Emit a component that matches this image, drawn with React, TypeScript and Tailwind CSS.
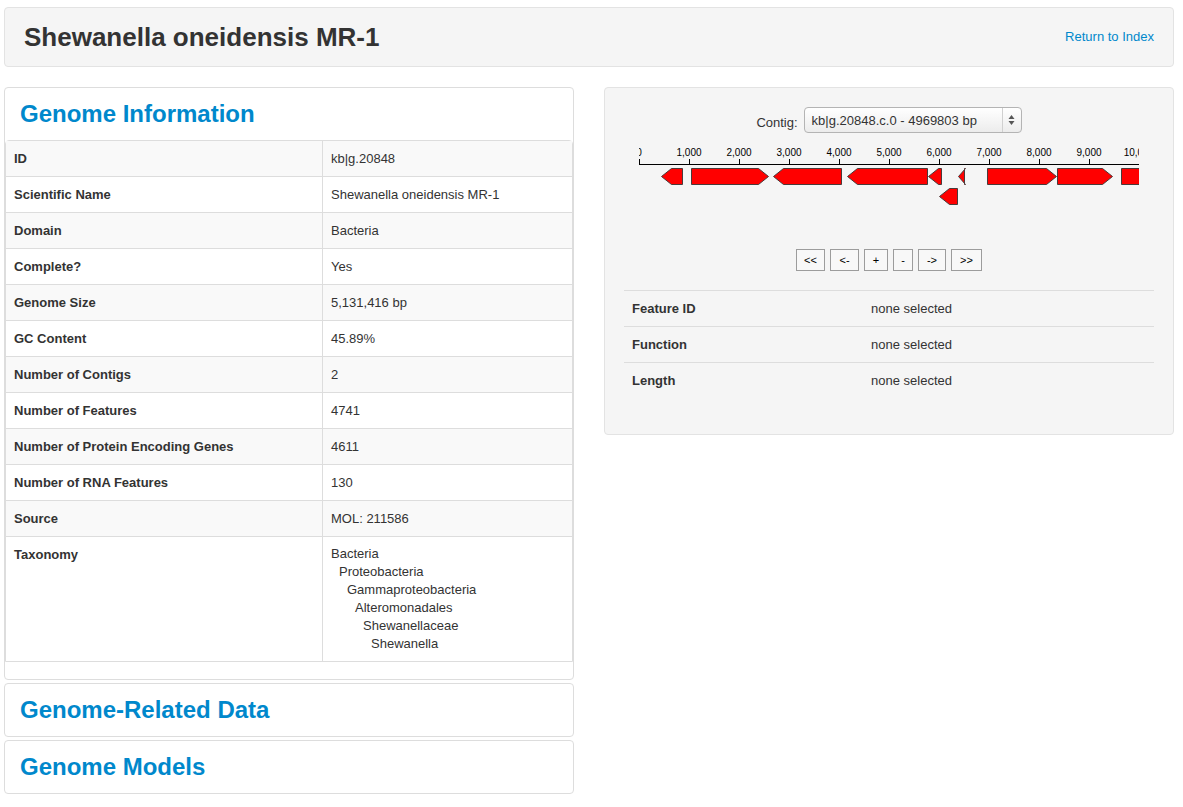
import React from 'react';

const genomeRows: { label: string; value: string }[] = [
  { label: 'ID', value: 'kb|g.20848' },
  { label: 'Scientific Name', value: 'Shewanella oneidensis MR-1' },
  { label: 'Domain', value: 'Bacteria' },
  { label: 'Complete?', value: 'Yes' },
  { label: 'Genome Size', value: '5,131,416 bp' },
  { label: 'GC Content', value: '45.89%' },
  { label: 'Number of Contigs', value: '2' },
  { label: 'Number of Features', value: '4741' },
  { label: 'Number of Protein Encoding Genes', value: '4611' },
  { label: 'Number of RNA Features', value: '130' },
  { label: 'Source', value: 'MOL: 211586' },
];

const taxonomy = [
  'Bacteria',
  'Proteobacteria',
  'Gammaproteobacteria',
  'Alteromonadales',
  'Shewanellaceae',
  'Shewanella',
];

// features in svg coords: start, end, direction, track
const features: { a: number; b: number; dir: 'L' | 'R' | 'N'; track: number }[] = [
  { a: 22, b: 44, dir: 'L', track: 0 },
  { a: 52, b: 130, dir: 'R', track: 0 },
  { a: 134, b: 203, dir: 'L', track: 0 },
  { a: 208, b: 289, dir: 'L', track: 0 },
  { a: 289, b: 303, dir: 'L', track: 0 },
  { a: 319, b: 326, dir: 'L', track: 0 },
  { a: 348, b: 418, dir: 'R', track: 0 },
  { a: 418, b: 474, dir: 'R', track: 0 },
  { a: 482, b: 520, dir: 'N', track: 0 },
  { a: 300, b: 319, dir: 'L', track: 1 },
];

function arrowPoints(a: number, b: number, dir: 'L' | 'R' | 'N', track: number) {
  const y0 = 28.5 + track * 20;
  const y1 = y0 + 16;
  const mid = (y0 + y1) / 2;
  const head = Math.min(10, b - a);
  const x0 = a + 0.5;
  const x1 = b - 0.5;
  if (dir === 'L') {
    return `${x0},${mid} ${x0 + head},${y0} ${x1},${y0} ${x1},${y1} ${x0 + head},${y1}`;
  }
  if (dir === 'R') {
    return `${x0},${y0} ${x1 - head},${y0} ${x1},${mid} ${x1 - head},${y1} ${x0},${y1}`;
  }
  return `${x0},${y0} ${x1},${y0} ${x1},${y1} ${x0},${y1}`;
}

function ContigBrowser() {
  const ticks = Array.from({ length: 11 }, (_, i) => i);
  return (
    <svg width="500" height="100" className="block overflow-hidden">
      {ticks.map((i) => (
        <g key={i}>
          <line x1={i * 50 + 0.5} y1={19} x2={i * 50 + 0.5} y2={24} stroke="#000" strokeWidth="1" />
          <text
            x={i * 50}
            y={16}
            textAnchor="middle"
            fontSize="10"
            fontFamily="'Liberation Sans', Arial, sans-serif"
            fill="#000"
          >
            {i === 0 ? '0' : `${i},000`}
          </text>
        </g>
      ))}
      <line x1={0} y1={24.5} x2={500} y2={24.5} stroke="#000" strokeWidth="1" />
      {features.map((f, i) => (
        <polygon key={i} points={arrowPoints(f.a, f.b, f.dir, f.track)} fill="#ff0000" stroke="#4a3a3a" strokeWidth="1" />
      ))}
    </svg>
  );
}

function SortArrows() {
  return (
    <svg width="7" height="12" viewBox="0 0 7 12">
      <polygon points="3.5,1 6.5,5 0.5,5" fill="#555" />
      <polygon points="0.5,7 6.5,7 3.5,11" fill="#555" />
    </svg>
  );
}

function NavButton({ label, w }: { label: string; w: string }) {
  return (
    <div
      className={`${w} h-[22px] flex items-center justify-center border border-[#9c9c9c] bg-[#f8f8f8] text-[11px] text-black`}
    >
      {label}
    </div>
  );
}

function PanelTitle({ children }: { children: React.ReactNode }) {
  return (
    <div className="h-[52px] flex items-center px-[15px] text-[24px] font-bold text-[#0088cc] leading-none">
      {children}
    </div>
  );
}

export default function App() {
  return (
    <div
      className="min-h-[807px] bg-white pt-[7px] text-[13px] text-[#333]"
      style={{ fontFamily: "'Liberation Sans', Arial, Helvetica, sans-serif" }}
    >
      <div className="ml-[4px] w-[1170px]">
        {/* header */}
        <div className="h-[60px] flex items-center justify-between px-[19px] bg-[#f5f5f5] border border-[#e3e3e3] rounded-[4px]">
          <h1 className="text-[26px] font-bold text-[#333] leading-none">Shewanella oneidensis MR-1</h1>
          <a className="text-[13px] text-[#0088cc]">Return to Index</a>
        </div>

        <div className="flex gap-[30px] mt-[20px] items-start">
          {/* left column */}
          <div className="w-[570px] flex flex-col gap-[3px]">
            <div className="border border-[#ddd] rounded-[4px] bg-white pb-[17px]">
              <PanelTitle>Genome Information</PanelTitle>
              <div className="border border-[#ddd] rounded-t-[4px]">
                {genomeRows.map((r, i) => (
                  <div
                    key={r.label}
                    className={`flex leading-[19px] ${i > 0 ? 'border-t border-[#ddd]' : ''} ${i % 2 === 0 ? 'bg-[#f9f9f9]' : 'bg-white'}`}
                  >
                    <div className="w-[317px] px-2 py-2 font-bold border-r border-[#ddd]">{r.label}</div>
                    <div className="flex-1 px-2 py-2">{r.value}</div>
                  </div>
                ))}
                <div className="flex border-t border-[#ddd] bg-white">
                  <div className="w-[317px] px-2 py-2 leading-[19px] font-bold border-r border-[#ddd]">Taxonomy</div>
                  <div className="flex-1 px-2 py-2 leading-[18px]">
                    {taxonomy.map((t, i) => (
                      <div key={t} style={{ paddingLeft: i * 8 }}>
                        {t}
                      </div>
                    ))}
                  </div>
                </div>
              </div>
            </div>
            <div className="border border-[#ddd] rounded-[4px] bg-white">
              <PanelTitle>Genome-Related Data</PanelTitle>
            </div>
            <div className="border border-[#ddd] rounded-[4px] bg-white">
              <PanelTitle>Genome Models</PanelTitle>
            </div>
          </div>

          {/* right column */}
          <div className="w-[570px] h-[348px] bg-[#f5f5f5] border border-[#e3e3e3] rounded-[4px] p-[19px]">
            <div className="flex items-end justify-center gap-[6px] h-[26px]">
              <span className="text-[13px] text-[#333] mb-[1px]">Contig:</span>
              <div className="w-[218px] h-[26px] flex items-center border border-[#b4b4b4] rounded-[4px] bg-linear-to-b from-white to-[#ececec] text-[13px] text-[#333]">
                <span className="flex-1 pl-[7px] pt-[1px]">kb|g.20848.c.0 - 4969803 bp</span>
                <span className="h-[24px] w-[19px] flex items-center justify-center border-l border-[#d0d0d0]">
                  <SortArrows />
                </span>
              </div>
            </div>
            <div className="flex justify-center mt-[7px]">
              <ContigBrowser />
            </div>
            <div className="flex justify-center gap-[5px] mt-[9px]">
              <NavButton label="<<" w="w-[29px]" />
              <NavButton label="<-" w="w-[29px]" />
              <NavButton label="+" w="w-[24px]" />
              <NavButton label="-" w="w-[20px]" />
              <NavButton label="->" w="w-[28px]" />
              <NavButton label=">>" w="w-[31px]" />
            </div>
            <div className="mt-[19px]">
              {['Feature ID', 'Function', 'Length'].map((l) => (
                <div key={l} className="flex border-t border-[#ddd] leading-[19px]">
                  <div className="w-[239px] px-2 py-2 font-bold">{l}</div>
                  <div className="flex-1 px-2 py-2">none selected</div>
                </div>
              ))}
            </div>
          </div>
        </div>
      </div>
    </div>
  );
}
